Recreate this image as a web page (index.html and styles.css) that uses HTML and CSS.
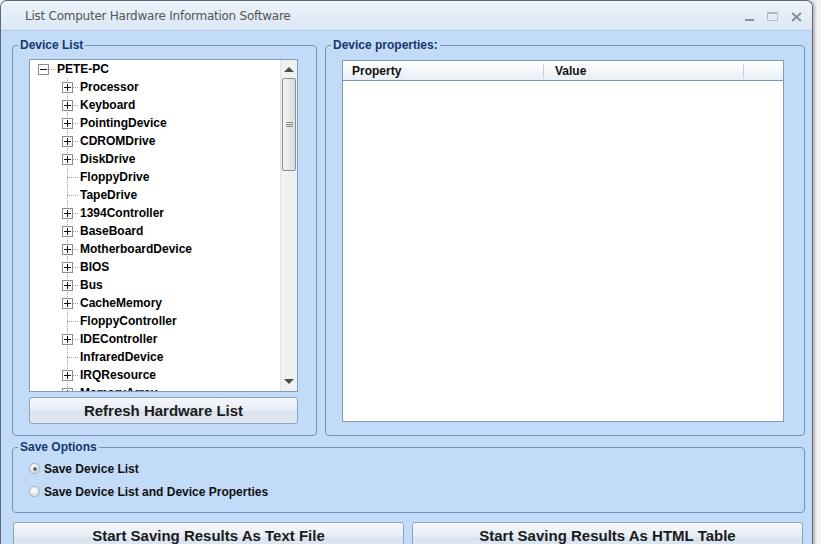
FILE: index.html
```html
<!DOCTYPE html>
<html lang="en">
    <head>
        <meta charset="UTF-8" />
        <title>List Computer Hardware Information Software</title>
        <link rel="stylesheet" href="styles.css">
    </head>
    <body>
        <div class="window">
            <div class="titlebar">
                <span class="title">List Computer Hardware Information Software</span>
                <div class="controls">
                    <span class="min"></span>
                    <span class="max"></span>
                    <svg class="close" width="11" height="10" viewBox="0 0 11 10"><path d="M1 1 L10 9 M10 1 L1 9" stroke="#8a8f96" stroke-width="2"/></svg>
                </div>
            </div>
            <div class="client">
                <div class="toprow">
                    <fieldset class="devlist">
                        <legend>Device List</legend>
                        <div class="treebox">
                            <div class="tree">
                                <div class="row root">
                                    <span class="rootbranch"><i class="exp minus"></i></span>
                                    <span class="label">PETE-PC</span>
                                </div>
                                <div class="row"><span class="branch"><i class="exp"></i></span><span class="label">Processor</span></div>
                                <div class="row"><span class="branch"><i class="exp"></i></span><span class="label">Keyboard</span></div>
                                <div class="row"><span class="branch"><i class="exp"></i></span><span class="label">PointingDevice</span></div>
                                <div class="row"><span class="branch"><i class="exp"></i></span><span class="label">CDROMDrive</span></div>
                                <div class="row"><span class="branch"><i class="exp"></i></span><span class="label">DiskDrive</span></div>
                                <div class="row"><span class="branch"></span><span class="label">FloppyDrive</span></div>
                                <div class="row"><span class="branch"></span><span class="label">TapeDrive</span></div>
                                <div class="row"><span class="branch"><i class="exp"></i></span><span class="label">1394Controller</span></div>
                                <div class="row"><span class="branch"><i class="exp"></i></span><span class="label">BaseBoard</span></div>
                                <div class="row"><span class="branch"><i class="exp"></i></span><span class="label">MotherboardDevice</span></div>
                                <div class="row"><span class="branch"><i class="exp"></i></span><span class="label">BIOS</span></div>
                                <div class="row"><span class="branch"><i class="exp"></i></span><span class="label">Bus</span></div>
                                <div class="row"><span class="branch"><i class="exp"></i></span><span class="label">CacheMemory</span></div>
                                <div class="row"><span class="branch"></span><span class="label">FloppyController</span></div>
                                <div class="row"><span class="branch"><i class="exp"></i></span><span class="label">IDEController</span></div>
                                <div class="row"><span class="branch"></span><span class="label">InfraredDevice</span></div>
                                <div class="row"><span class="branch"><i class="exp"></i></span><span class="label">IRQResource</span></div>
                                <div class="row"><span class="branch"><i class="exp"></i></span><span class="label">MemoryArray</span></div>
                            </div>
                            <div class="vscroll">
                                <span class="arrow up"></span>
                                <div class="thumb"><span class="grip"></span></div>
                                <span class="arrow down"></span>
                            </div>
                        </div>
                        <button class="btn refresh">Refresh Hardware List</button>
                    </fieldset>
                    <fieldset class="props">
                        <legend>Device properties:</legend>
                        <div class="table">
                            <div class="thead">
                                <span class="col c1">Property</span>
                                <span class="col c2">Value</span>
                                <span class="col c3"></span>
                            </div>
                        </div>
                    </fieldset>
                </div>
                <fieldset class="options">
                    <legend>Save Options</legend>
                    <label class="radio"><span class="dot checked"></span>Save Device List</label>
                    <label class="radio"><span class="dot"></span>Save Device List and Device Properties</label>
                </fieldset>
                <div class="buttons">
                    <button class="btn big">Start Saving Results As Text File</button>
                    <button class="btn big">Start Saving Results As HTML Table</button>
                </div>
            </div>
        </div>
    </body>
</html>
```
FILE: styles.css
```css
* {
    margin: 0;
    padding: 0;
    box-sizing: border-box;
}
html, body {
    width: 821px;
    height: 544px;
    overflow: hidden;
}
body {
    background: #f2f2f2;
    font-family: "Liberation Sans", Arial, sans-serif;
    font-size: 12px;
}

/* window frame */
.window {
    width: 813px;
    height: 580px;
    border: 1px solid #5d6672;
    border-bottom: none;
    border-radius: 7px 7px 0 0;
    background: #c1dbf9;
    box-shadow: 2px 0 3px rgba(0, 0, 0, 0.25);
    overflow: hidden;
}
.titlebar {
    height: 30px;
    display: flex;
    align-items: center;
    justify-content: space-between;
    background: linear-gradient(#edf3fa, #dae7f5);
    border-bottom: 1px solid #b3c9e3;
    padding: 0 10px 0 24px;
}
.title {
    color: #555;
    font-family: "DejaVu Sans", "Liberation Sans", sans-serif;
    font-size: 12px;
    letter-spacing: -0.25px;
}
.controls {
    display: flex;
    align-items: center;
    gap: 13px;
    padding-top: 2px;
}
.controls .min {
    width: 9px;
    height: 2px;
    background: #8a8f96;
    margin-top: 6px;
}
.controls .max {
    width: 11px;
    height: 9px;
    border: 1px solid #b9bec4;
    border-top: 2px solid #b0b5bb;
}

/* client area */
.client {
    padding: 7px 7px 0 11px;
}
.toprow {
    display: flex;
    gap: 8px;
}
fieldset {
    border: 1px solid #7592b8;
    border-radius: 4px;
}
legend {
    color: #17386a;
    font-weight: bold;
    font-size: 12px;
    line-height: 14px;
    padding: 0 2px;
    margin-left: -11px;
}
.devlist {
    width: 305px;
    height: 398px;
    padding: 7px 18px 10px 16px;
}
.props {
    width: 480px;
    height: 398px;
    padding: 8px 20px 12px 16px;
}

/* tree */
.treebox {
    height: 333px;
    border: 1px solid #7f9db9;
    background: #fff;
    display: flex;
    overflow: hidden;
}
.tree {
    flex: 1;
    overflow: hidden;
}
.row {
    height: 18px;
    display: flex;
    align-items: center;
    font-weight: bold;
    color: #000;
}
.root {
    padding-left: 7px;
}
.row .branch {
    position: relative;
    width: 22px;
    height: 18px;
    margin-left: 28px;
    background-image:
        repeating-linear-gradient(to bottom, #a0a0a0 0 1px, transparent 1px 2px),
        repeating-linear-gradient(to right, #a0a0a0 0 1px, transparent 1px 2px);
    background-size: 1px 18px, 12px 1px;
    background-position: 9px 0, 9px 9px;
    background-repeat: no-repeat;
}
.rootbranch {
    position: relative;
    width: 20px;
    height: 18px;
    background-image: repeating-linear-gradient(to right, #a0a0a0 0 1px, transparent 1px 2px);
    background-size: 8px 1px;
    background-position: 12px 9px;
    background-repeat: no-repeat;
}
.exp {
    position: absolute;
    left: 4px;
    top: 4px;
    width: 11px;
    height: 11px;
    border: 1px solid #8c8c8c;
    background:
        linear-gradient(#111, #111) center / 7px 1px no-repeat,
        linear-gradient(#111, #111) center / 1px 7px no-repeat,
        #fff;
}
.rootbranch .exp {
    left: 1px;
}
.exp.minus {
    background: linear-gradient(#111, #111) center / 7px 1px no-repeat, #fff;
}
.label {
    white-space: nowrap;
}

/* scrollbar */
.vscroll {
    width: 17px;
    background: #f0f0f0;
    border-left: 1px solid #e2e2e2;
    display: flex;
    flex-direction: column;
    align-items: center;
}
.arrow {
    width: 0;
    height: 0;
    border-left: 5px solid transparent;
    border-right: 5px solid transparent;
}
.arrow.up {
    border-bottom: 5px solid #4d4d4d;
    margin: 7px 0 6px;
}
.arrow.down {
    border-top: 5px solid #4d4d4d;
    margin-top: auto;
    margin-bottom: 7px;
}
.thumb {
    width: 14px;
    height: 93px;
    border: 1px solid #8b8e92;
    border-radius: 2px;
    background: linear-gradient(to right, #f4f5f6, #dadde2);
    display: flex;
    align-items: center;
    justify-content: center;
}
.grip {
    width: 7px;
    height: 5px;
    border-top: 1px solid #888;
    border-bottom: 1px solid #888;
    background: linear-gradient(#888, #888) center / 7px 1px no-repeat;
}

/* buttons */
.btn {
    font-family: "Liberation Sans", Arial, sans-serif;
    font-weight: bold;
    color: #1b1b1b;
    border: 1px solid #8aa3c2;
    border-radius: 3px;
    background: linear-gradient(#f4f7fb 0%, #e9eff7 45%, #d9e3ef 55%, #dfe7f1 100%);
}
.refresh {
    width: 100%;
    height: 27px;
    margin-top: 5px;
    font-size: 15px;
}

/* properties table */
.table {
    height: 362px;
    border: 1px solid #7f9db9;
    background: #fff;
}
.thead {
    display: flex;
    height: 20px;
    border-bottom: 1px solid #7d93ad;
    background: linear-gradient(#ffffff, #e8eef5);
}
.col {
    font-weight: bold;
    color: #111;
    margin: 3px 0 2px;
    line-height: 14px;
}
.c1 {
    width: 201px;
    padding-left: 9px;
    border-right: 1px solid #c9d2dc;
}
.c2 {
    width: 200px;
    padding-left: 11px;
    border-right: 1px solid #c9d2dc;
}
.c3 {
    flex: 1;
}

/* save options */
.options {
    margin-top: 4px;
    width: 793px;
    height: 73px;
    padding: 3px 0 0 16px;
}
.radio {
    display: flex;
    align-items: center;
    height: 23px;
    font-weight: bold;
    color: #111;
}
.dot {
    width: 11px;
    height: 11px;
    border-radius: 50%;
    border: 1px solid #a8acb1;
    background: radial-gradient(circle at 40% 35%, #ffffff, #d3d6da);
    margin-right: 4px;
    display: flex;
    align-items: center;
    justify-content: center;
}
.dot.checked::after {
    content: "";
    width: 4px;
    height: 4px;
    border-radius: 50%;
    background: #5f6b78;
}

.buttons {
    display: flex;
    gap: 8px;
    margin-top: 9px;
    padding-left: 1px;
}
.big {
    width: 391px;
    height: 30px;
    font-size: 15px;
    padding-bottom: 4px;
}
```
